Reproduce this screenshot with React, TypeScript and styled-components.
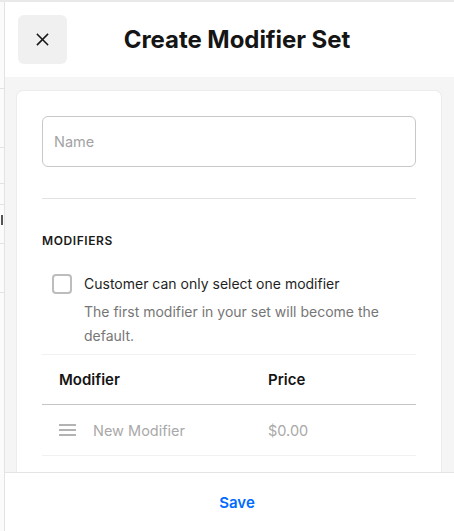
import React from "react";
import styled, { createGlobalStyle } from "styled-components";

const Global = createGlobalStyle`
  html, body { margin: 0; padding: 0; background: #ffffff; }
  body { font-family: Inter, "Noto Sans", Arial, sans-serif; -webkit-font-smoothing: antialiased; }
  * { box-sizing: border-box; }
`;

const Screen = styled.div`
  width: 454px;
  height: 531px;
  display: flex;
  overflow: hidden;
  border-top: 2px solid #e9e9e9;
`;

const Backdrop = styled.div`
  width: 4px;
  flex: none;
  display: flex;
  flex-direction: column;
  background: #fbfbfb;
`;

const BackdropLine = styled.div<{ $gap: number }>`
  margin-top: ${(p) => p.$gap}px;
  height: 1px;
  background: #e2e2e2;
`;

const BackdropMark = styled.div`
  margin-top: 10px;
  margin-left: 1px;
  width: 2px;
  height: 10px;
  background: #555;
`;

const Panel = styled.div`
  flex: 1;
  display: flex;
  flex-direction: column;
  border-left: 1px solid #e3e3e3;
  background: #fff;
  min-width: 0;
`;

const Header = styled.header`
  height: 75px;
  flex: none;
  display: grid;
  grid-template-columns: 49px 1fr 34px;
  align-items: center;
  padding: 0 13px;
  background: #fff;
`;

const CloseButton = styled.button`
  width: 49px;
  height: 49px;
  border: none;
  border-radius: 6px;
  background: #f0f0f0;
  display: flex;
  align-items: center;
  justify-content: center;
  padding: 0;
  color: #1a1a1a;
  cursor: pointer;
`;

const Title = styled.h1`
  margin: 0;
  text-align: center;
  font-size: 24px;
  font-weight: 700;
  color: #151515;
  letter-spacing: -0.05px;
`;

const Body = styled.div`
  flex: 1;
  min-height: 0;
  overflow: hidden;
  background: #f5f5f5;
  padding: 14px 13px 0 12px;
`;

const Card = styled.section`
  background: #fff;
  border-radius: 6px;
  box-shadow: 0 0 0 1px #ececec, 0 1px 2px rgba(0, 0, 0, 0.04);
  padding: 25px 25px 40px;
`;

const NameInput = styled.input`
  display: block;
  width: 100%;
  height: 51px;
  border: 1px solid #c8c8c8;
  border-radius: 6px;
  padding: 0 11px;
  font-family: inherit;
  font-size: 14.5px;
  color: #1a1a1a;
  outline: none;
  &::placeholder { color: #a3a3a3; }
`;

const Divider = styled.div<{ $tone: "light" | "faint" | "strong"; $top?: number }>`
  height: 1px;
  margin-top: ${(p) => p.$top ?? 0}px;
  background: ${(p) =>
    p.$tone === "strong" ? "#c4c4c4" : p.$tone === "light" ? "#e2e2e2" : "#f1f1f1"};
`;

const SectionLabel = styled.div`
  margin-top: 34px;
  font-size: 12px;
  line-height: 16px;
  font-weight: 600;
  letter-spacing: 0.6px;
  color: #1a1a1a;
`;

const OptionRow = styled.label`
  margin-top: 23px;
  padding-left: 10px;
  display: grid;
  grid-template-columns: 20px 1fr;
  column-gap: 12px;
  padding-bottom: 7px;
`;

const Box = styled.span`
  margin-top: 2px;
  width: 20px;
  height: 20px;
  border: 2px solid #bdbdbd;
  border-radius: 4px;
  background: #fff;
`;

const OptionText = styled.div`
  display: flex;
  flex-direction: column;
`;

const OptionTitle = styled.span`
  font-size: 14px;
  line-height: 24px;
  color: #1f1f1f;
`;

const OptionHint = styled.span`
  margin-top: 4px;
  font-size: 14px;
  line-height: 23.5px;
  color: #767676;
`;

const TableRow = styled.div<{ $height: number }>`
  display: grid;
  grid-template-columns: 209px 1fr;
  align-items: center;
  height: ${(p) => p.$height}px;
  padding-left: 17px;
`;

const HeadCell = styled.span`
  font-size: 15px;
  font-weight: 600;
  color: #151515;
`;

const NameCell = styled.span`
  display: flex;
  align-items: center;
  gap: 17px;
  font-size: 14.5px;
  color: #a9a9a9;
`;

const PriceCell = styled.span`
  font-size: 14.5px;
  color: #a9a9a9;
`;

const Note = styled.p`
  margin: 16px 0 0 28px;
  font-size: 14px;
  line-height: 22px;
  color: #6f6f6f;
`;

const Footer = styled.footer`
  height: 59px;
  flex: none;
  display: flex;
  align-items: center;
  justify-content: center;
  padding-left: 15px;
  border-top: 1px solid #e4e4e4;
  background: #fff;
`;

const SaveButton = styled.button`
  border: none;
  background: none;
  font-family: inherit;
  font-size: 15px;
  font-weight: 600;
  color: #006aff;
  cursor: pointer;
  padding: 6px 12px;
`;

const CloseIcon = () => (
  <svg width="13" height="13" viewBox="0 0 13 13" fill="none" stroke="currentColor" strokeWidth="1.6" strokeLinecap="square">
    <path d="M1.5 1.5 L11.5 11.5 M11.5 1.5 L1.5 11.5" />
  </svg>
);

const DragIcon = () => (
  <svg width="17" height="12" viewBox="0 0 17 12" fill="none" stroke="#9a9a9a" strokeWidth="1.3">
    <path d="M0 1 H17 M0 6 H17 M0 11 H17" />
  </svg>
);

export default function App() {
  return (
    <>
      <Global />
      <Screen>
        <Backdrop>
          <BackdropLine $gap={86} />
          <BackdropLine $gap={58} />
          <BackdropLine $gap={35} />
          <BackdropLine $gap={20} />
          <BackdropMark />
          <BackdropLine $gap={18} />
          <BackdropLine $gap={48} />
        </Backdrop>
        <Panel>
          <Header>
            <CloseButton aria-label="Close">
              <CloseIcon />
            </CloseButton>
            <Title>Create Modifier Set</Title>
            <span />
          </Header>
          <Body>
            <Card>
              <NameInput placeholder="Name" />
              <Divider $tone="light" $top={31} />
              <SectionLabel>MODIFIERS</SectionLabel>
              <OptionRow>
                <Box />
                <OptionText>
                  <OptionTitle>Customer can only select one modifier</OptionTitle>
                  <OptionHint>The first modifier in your set will become the default.</OptionHint>
                </OptionText>
              </OptionRow>
              <Divider $tone="faint" />
              <TableRow $height={49}>
                <HeadCell>Modifier</HeadCell>
                <HeadCell>Price</HeadCell>
              </TableRow>
              <Divider $tone="strong" />
              <TableRow $height={50}>
                <NameCell>
                  <DragIcon />
                  New Modifier
                </NameCell>
                <PriceCell>$0.00</PriceCell>
              </TableRow>
              <Divider $tone="faint" />
              <Note>Track inventory and set defaults for each modifier in this set.</Note>
            </Card>
          </Body>
          <Footer>
            <SaveButton>Save</SaveButton>
          </Footer>
        </Panel>
      </Screen>
    </>
  );
}
